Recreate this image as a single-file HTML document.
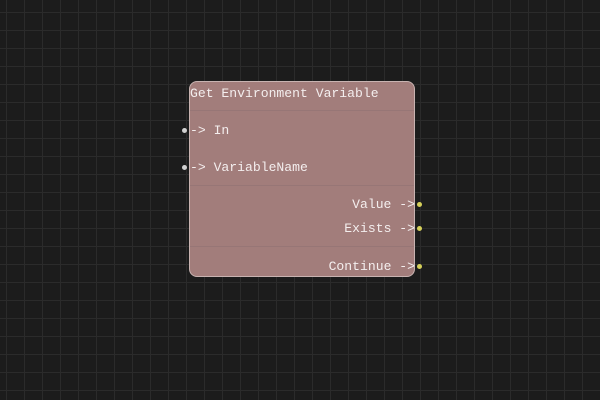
<!DOCTYPE html>
<html><head><style>
html,body{margin:0;padding:0;}
body{width:600px;height:400px;overflow:hidden;background-color:#1c1c1c;
background-image:linear-gradient(to right,#2b2b2b 1px,transparent 1px),linear-gradient(to bottom,#2b2b2b 1px,transparent 1px);
background-size:18px 18px;background-position:6px 12px;position:relative;
font-family:"Liberation Mono",monospace;font-size:13.1px;color:#f4eeee;}
.node{position:absolute;left:189px;top:81px;width:224px;height:194px;background:#a27d7b;border:1px solid #c8b3b1;border-radius:8px;}
.sep{position:absolute;left:0;right:0;height:1px;background:#977676;}
.t{position:absolute;white-space:pre;line-height:14px;}
.dot{position:absolute;width:5px;height:5px;border-radius:50%;}
.g{background:#d0d0d0}.y{background:#d6d05a}
</style></head><body>
<div class="node">
<div class="sep" style="top:28px"></div>
<div class="sep" style="top:103px"></div>
<div class="sep" style="top:164px"></div>
</div>
<div class="t" style="left:190px;top:87px">Get Environment Variable</div>
<div class="t" style="left:190px;top:124px">-> In</div>
<div class="t" style="left:190px;top:161px">-> VariableName</div>
<div class="t" style="right:185px;top:198px">Value -></div>
<div class="t" style="right:185px;top:222px">Exists -></div>
<div class="t" style="right:185px;top:260px">Continue -></div>
<div class="dot g" style="left:182px;top:128px"></div>
<div class="dot g" style="left:182px;top:165px"></div>
<div class="dot y" style="left:417px;top:202px"></div>
<div class="dot y" style="left:417px;top:226px"></div>
<div class="dot y" style="left:417px;top:264px"></div>
</body></html>
